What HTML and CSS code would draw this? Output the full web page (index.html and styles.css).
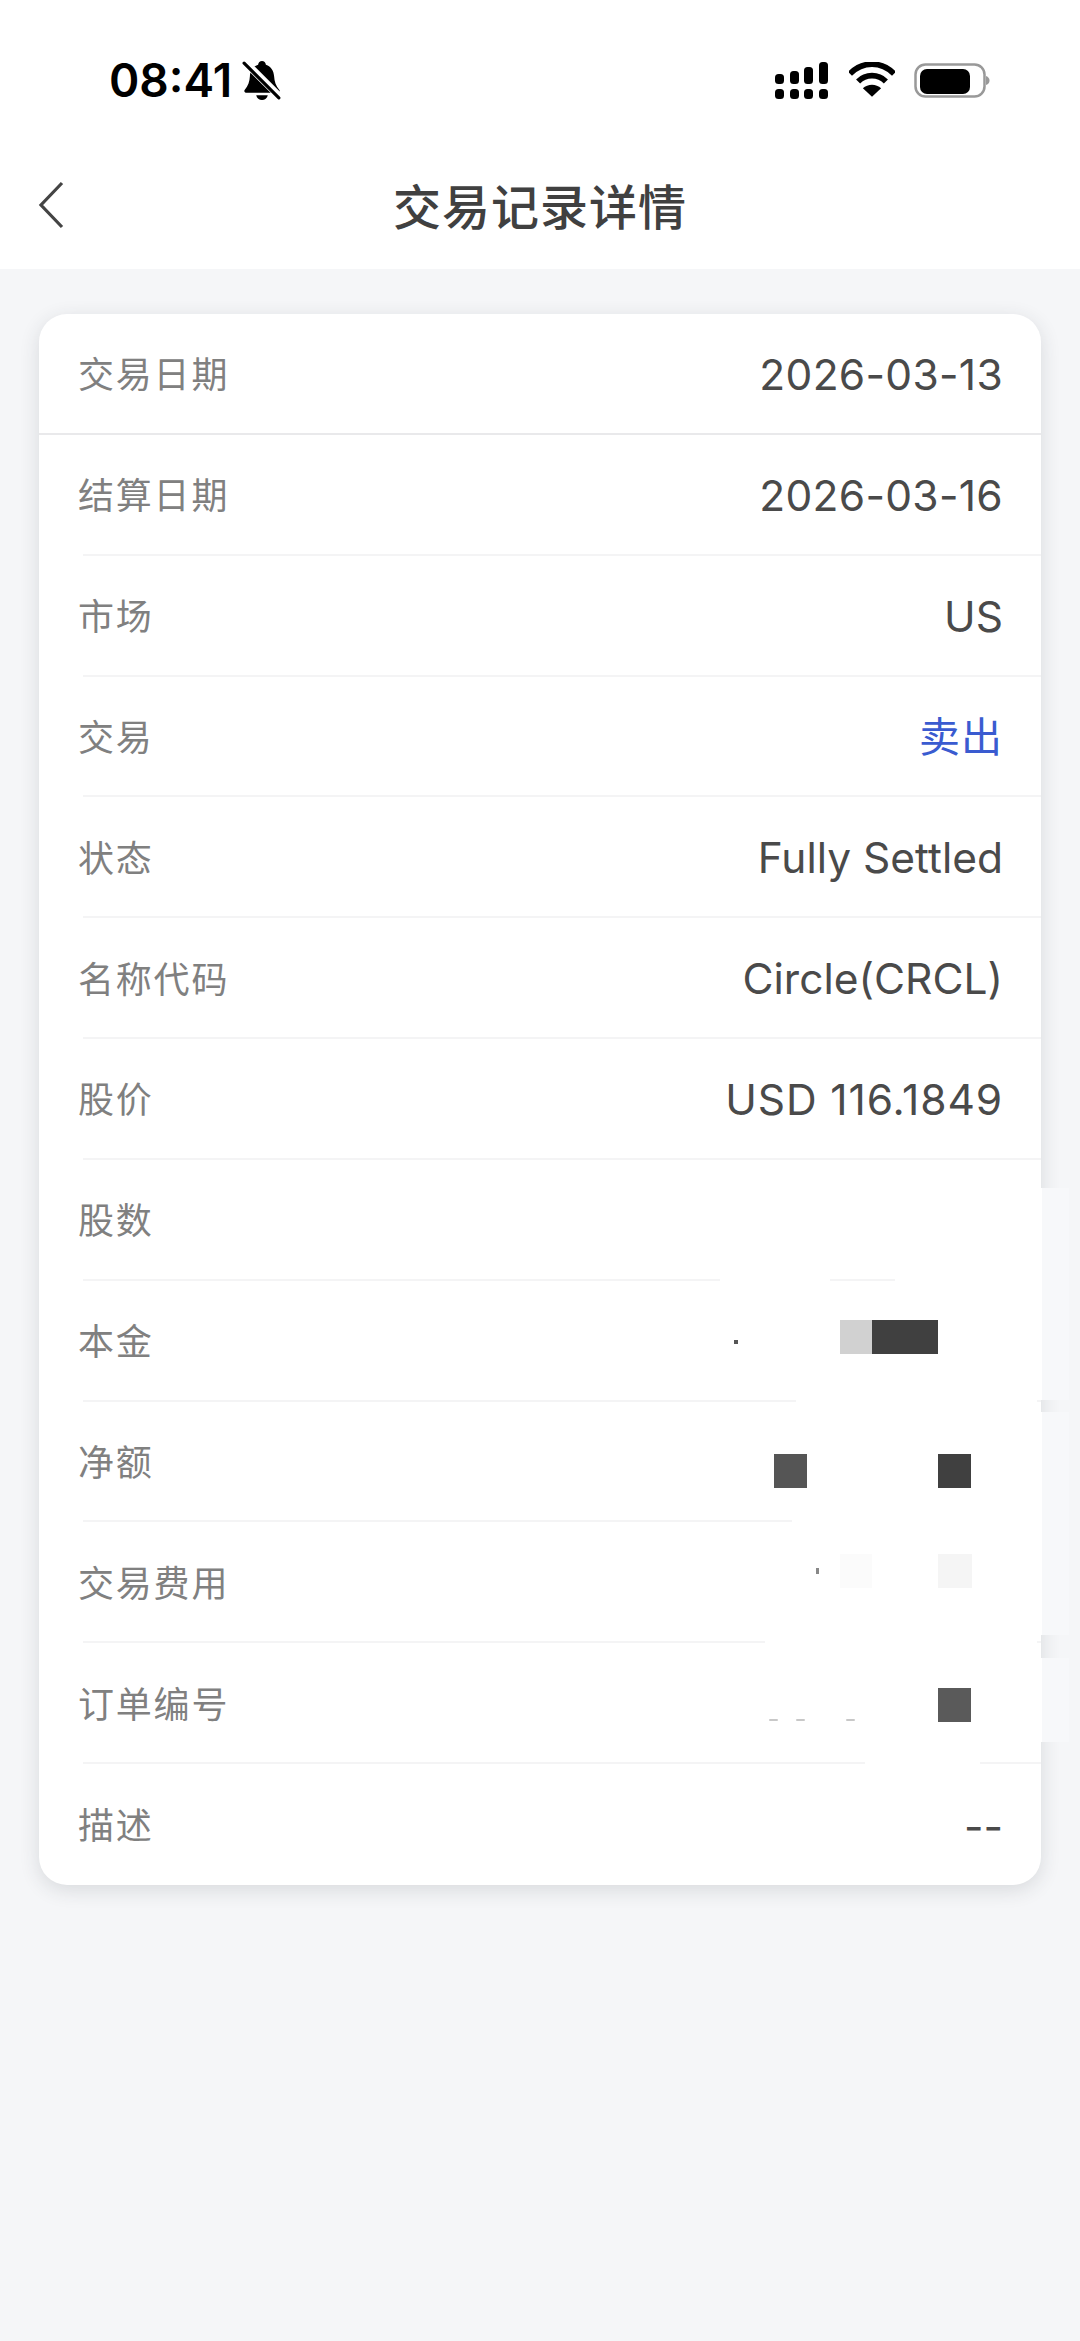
FILE: index.html
```html
<!DOCTYPE html>
<html lang="zh-CN">
<head>
<meta charset="utf-8">
<title>交易记录详情</title>
<link rel="stylesheet" href="styles.css">
</head>
<body>
<header class="top">
  <div class="status">
    <div class="status-left">
      <span class="time">08:41</span>
      <svg class="bell" viewBox="0 0 38 38" aria-hidden="true">
        <path d="M19 1c2 0 3.500 1.500 3.700 3.500 5 1.500 7.500 6 7.800 11 .3 5 1.500 9 5 13 .7 1 .2 2.500-1.200 2.500H3.700c-1.400 0-1.900-1.500-1.200-2.500 3.500-4 4.700-8 5-13C7.800 10.500 10 6 15.300 4.500 15.500 2.500 17 1 19 1z" fill="#000"/>
        <path d="M13.500 33.500h11c-.5 2.800-2.800 4.500-5.500 4.500s-5-1.700-5.500-4.500z" fill="#000"/>
        <path d="M2 1l35 35" stroke="#fff" stroke-width="7" fill="none"/>
        <path d="M2 3l33 33" stroke="#000" stroke-width="3" stroke-linecap="round" fill="none"/>
      </svg>
    </div>
    <div class="status-right">
      <svg class="signal" viewBox="0 0 54 38" aria-hidden="true">
        <rect x="0" y="12" width="9" height="10" rx="3.500"/>
        <rect x="15" y="9" width="9" height="13" rx="3.500"/>
        <rect x="29" y="5" width="9" height="17" rx="3.500"/>
        <rect x="44" y="0" width="9" height="22" rx="3.500"/>
        <rect x="0" y="27" width="9" height="10" rx="3.500"/>
        <rect x="15" y="27" width="9" height="10" rx="3.500"/>
        <rect x="29" y="27" width="9" height="10" rx="3.500"/>
        <rect x="44" y="27" width="9" height="10" rx="3.500"/>
      </svg>
      <svg class="wifi" viewBox="0 0 48 36" aria-hidden="true">
        <path d="M1 12C7.500 5.500 15.500 2 24 2s16.500 3.500 23 10" fill="none" stroke="#000" stroke-width="6"/>
        <path d="M9.500 20C13.500 16 18.500 14 24 14s10.500 2 14.500 6" fill="none" stroke="#000" stroke-width="6"/>
        <path d="M14.500 27c2.500-2.200 6-3.500 9.500-3.500s7 1.300 9.500 3.500L24 36z" fill="#000"/>
      </svg>
      <svg class="battery" viewBox="0 0 76 36" aria-hidden="true">
        <rect x="1.500" y="1.500" width="69" height="32" rx="10" fill="none" stroke="#999" stroke-width="2.500"/>
        <rect x="6" y="6" width="50" height="25" rx="7" fill="#000"/>
        <path d="M72 13c2.500 1 3.500 2.500 3.500 4.500S74.500 21 72 22z" fill="#999"/>
      </svg>
    </div>
  </div>
  <nav class="nav">
    <svg class="back" viewBox="0 0 26 48" aria-hidden="true">
      <path d="M24 2L3 24l21 22" fill="none" stroke="#444" stroke-width="3.200"/>
    </svg>
    <h1 class="title">交易记录详情</h1>
  </nav>
</header>
<main class="content">
  <section class="card">
    <div class="row row-first"><span class="label">交易日期</span><span class="value value-date">2026-03-13</span></div>
    <div class="row"><span class="label">结算日期</span><span class="value value-date">2026-03-16</span></div>
    <div class="row"><span class="label">市场</span><span class="value">US</span></div>
    <div class="row"><span class="label">交易</span><span class="value value-blue">卖出</span></div>
    <div class="row"><span class="label">状态</span><span class="value">Fully Settled</span></div>
    <div class="row"><span class="label">名称代码</span><span class="value">Circle(CRCL)</span></div>
    <div class="row"><span class="label">股价</span><span class="value value-price">USD 116.1849</span></div>
    <div class="row"><span class="label">股数</span></div>
    <div class="row"><span class="label">本金</span></div>
    <div class="row"><span class="label">净额</span></div>
    <div class="row"><span class="label">交易费用</span></div>
    <div class="row"><span class="label">订单编号</span></div>
    <div class="row row-last"><span class="label">描述</span><span class="value value-dash">--</span></div>
  </section>
  <div class="patch patch-side-a"></div>
  <div class="patch patch-side-b"></div>
  <div class="patch patch-side-c"></div>
  <div class="patch patch-line-a"></div>
  <div class="patch patch-line-b"></div>
  <div class="patch patch-line-c"></div>
  <div class="patch patch-line-d"></div>
  <div class="patch patch-line-e"></div>
  <div class="patch patch-line-f"></div>
  <i class="block b-principal-light"></i>
  <i class="block b-principal-dark"></i>
  <i class="block b-dot"></i>
  <i class="block b-net-a"></i>
  <i class="block b-net-b"></i>
  <i class="block b-fee-tick"></i>
  <i class="block b-fee-a"></i>
  <i class="block b-fee-b"></i>
  <i class="block b-order"></i>
  <i class="block b-arc b-arc-a"></i>
  <i class="block b-arc b-arc-b"></i>
  <i class="block b-arc b-arc-c"></i>
</main>
</body>
</html>
```
FILE: styles.css
```css
* { box-sizing: border-box; }
html, body { margin: 0; padding: 0; }
body {
  width: 1080px;
  height: 2341px;
  background: #f5f6f8;
  font-family: Inter, "Noto Sans CJK SC", sans-serif;
  overflow: hidden;
}
.top { background: #fff; height: 269px; display: flex; flex-direction: column; }
.status {
  height: 150px;
  padding: 56px 90px 0 109px;
  display: flex;
  justify-content: space-between;
  align-items: flex-start;
}
.status-left { display: flex; align-items: center; gap: 10px; height: 48px; }
.time { font-size: 46px; font-weight: 600; line-height: 48px; color: #000; }
.bell { width: 40px; height: 40px; }
.status-right { display: flex; align-items: flex-start; padding-top: 6px; }
.signal { width: 54px; height: 38px; fill: #000; }
.wifi { width: 46px; height: 35px; margin-left: 20px; }
.battery { width: 76px; height: 36px; margin-left: 19px; margin-top: 1px; }
.nav {
  position: relative;
  height: 119px;
  display: flex;
  align-items: center;
  justify-content: center;
}
.back { position: absolute; left: 38px; top: 31px; width: 26px; height: 48px; }
.title {
  margin: 0;
  font-family: "Noto Sans CJK SC", sans-serif;
  font-size: 48px;
  font-weight: 500;
  line-height: 60px;
  color: #404040;
  letter-spacing: 1px;
  transform: translateY(-6px);
}
.content { position: relative; padding: 45px 39px 0; }
.card {
  background: #fff;
  border-radius: 28px;
  box-shadow: 0 5px 20px rgba(40, 50, 60, .14);
  display: flex;
  flex-direction: column;
  height: 1571px;
}
.row {
  position: relative;
  flex: 1 1 0;
  display: flex;
  justify-content: space-between;
  align-items: center;
  padding: 0 38px 0 39px;
}
.row::after {
  content: "";
  position: absolute;
  left: 44px;
  right: 0;
  bottom: 0;
  height: 2px;
  background: #f4f4f5;
}
.row-first::after { left: 0; background: #e9e9eb; }
.row-last::after { display: none; }
.label {
  font-family: "Noto Sans CJK SC", sans-serif;
  font-size: 36px;
  color: #808080;
  letter-spacing: 1.800px;
  position: relative;
  top: -2px;
}
.value {
  font-size: 42.500px;
  color: #4a4a4a;
}
.value-date { letter-spacing: .3px; }
.value-price { letter-spacing: .9px; }
.value-dash { position: relative; top: 2px; }
.value-blue {
  font-family: "Noto Sans CJK SC", sans-serif;
  font-size: 41px;
  color: #3a5bd0;
  letter-spacing: 1px;
  position: relative;
  top: -3px;
}
.patch, .block { position: absolute; display: block; }
.patch { background: #fff; }
.patch-side-a { left: 1040px; top: 919px; width: 29px; height: 212px; background: linear-gradient(90deg, #fff 0 2px, #f7f8fa 2px); }
.patch-side-b { left: 1040px; top: 1143px; width: 29px; height: 223px; background: linear-gradient(90deg, #fff 0 2px, #f7f8fa 2px); }
.patch-side-c { left: 1040px; top: 1389px; width: 29px; height: 84px; background: linear-gradient(90deg, #fff 0 2px, #f7f8fa 2px); }
.patch-line-a { left: 720px; top: 1010px; width: 110px; height: 4px; }
.patch-line-b { left: 895px; top: 1010px; width: 145px; height: 4px; }
.patch-line-c { left: 796px; top: 1130px; width: 241px; height: 4px; }
.patch-line-d { left: 792px; top: 1251px; width: 248px; height: 4px; }
.patch-line-e { left: 765px; top: 1372px; width: 272px; height: 4px; }
.patch-line-f { left: 865px; top: 1493px; width: 115px; height: 4px; }
.b-principal-light { left: 840px; top: 1051px; width: 32px; height: 34px; background: #d1d1d1; }
.b-principal-dark { left: 872px; top: 1051px; width: 66px; height: 34px; background: #404040; }
.b-dot { left: 734px; top: 1071px; width: 4px; height: 4px; background: #555; }
.b-net-a { left: 774px; top: 1185px; width: 33px; height: 34px; background: #555; }
.b-net-b { left: 938px; top: 1185px; width: 33px; height: 34px; background: #404040; }
.b-fee-tick { left: 816px; top: 1299px; width: 3px; height: 6px; background: #888; }
.b-fee-a { left: 840px; top: 1285px; width: 32px; height: 34px; background: #fbfbfb; }
.b-fee-b { left: 938px; top: 1285px; width: 34px; height: 34px; background: #f5f5f5; }
.b-order { left: 938px; top: 1419px; width: 33px; height: 34px; background: #5a5a5a; }
.b-arc { top: 1450px; width: 9px; height: 2px; background: #c8c8c8; border-radius: 2px; }
.b-arc-a { left: 769px; }
.b-arc-b { left: 796px; }
.b-arc-c { left: 846px; }
```
